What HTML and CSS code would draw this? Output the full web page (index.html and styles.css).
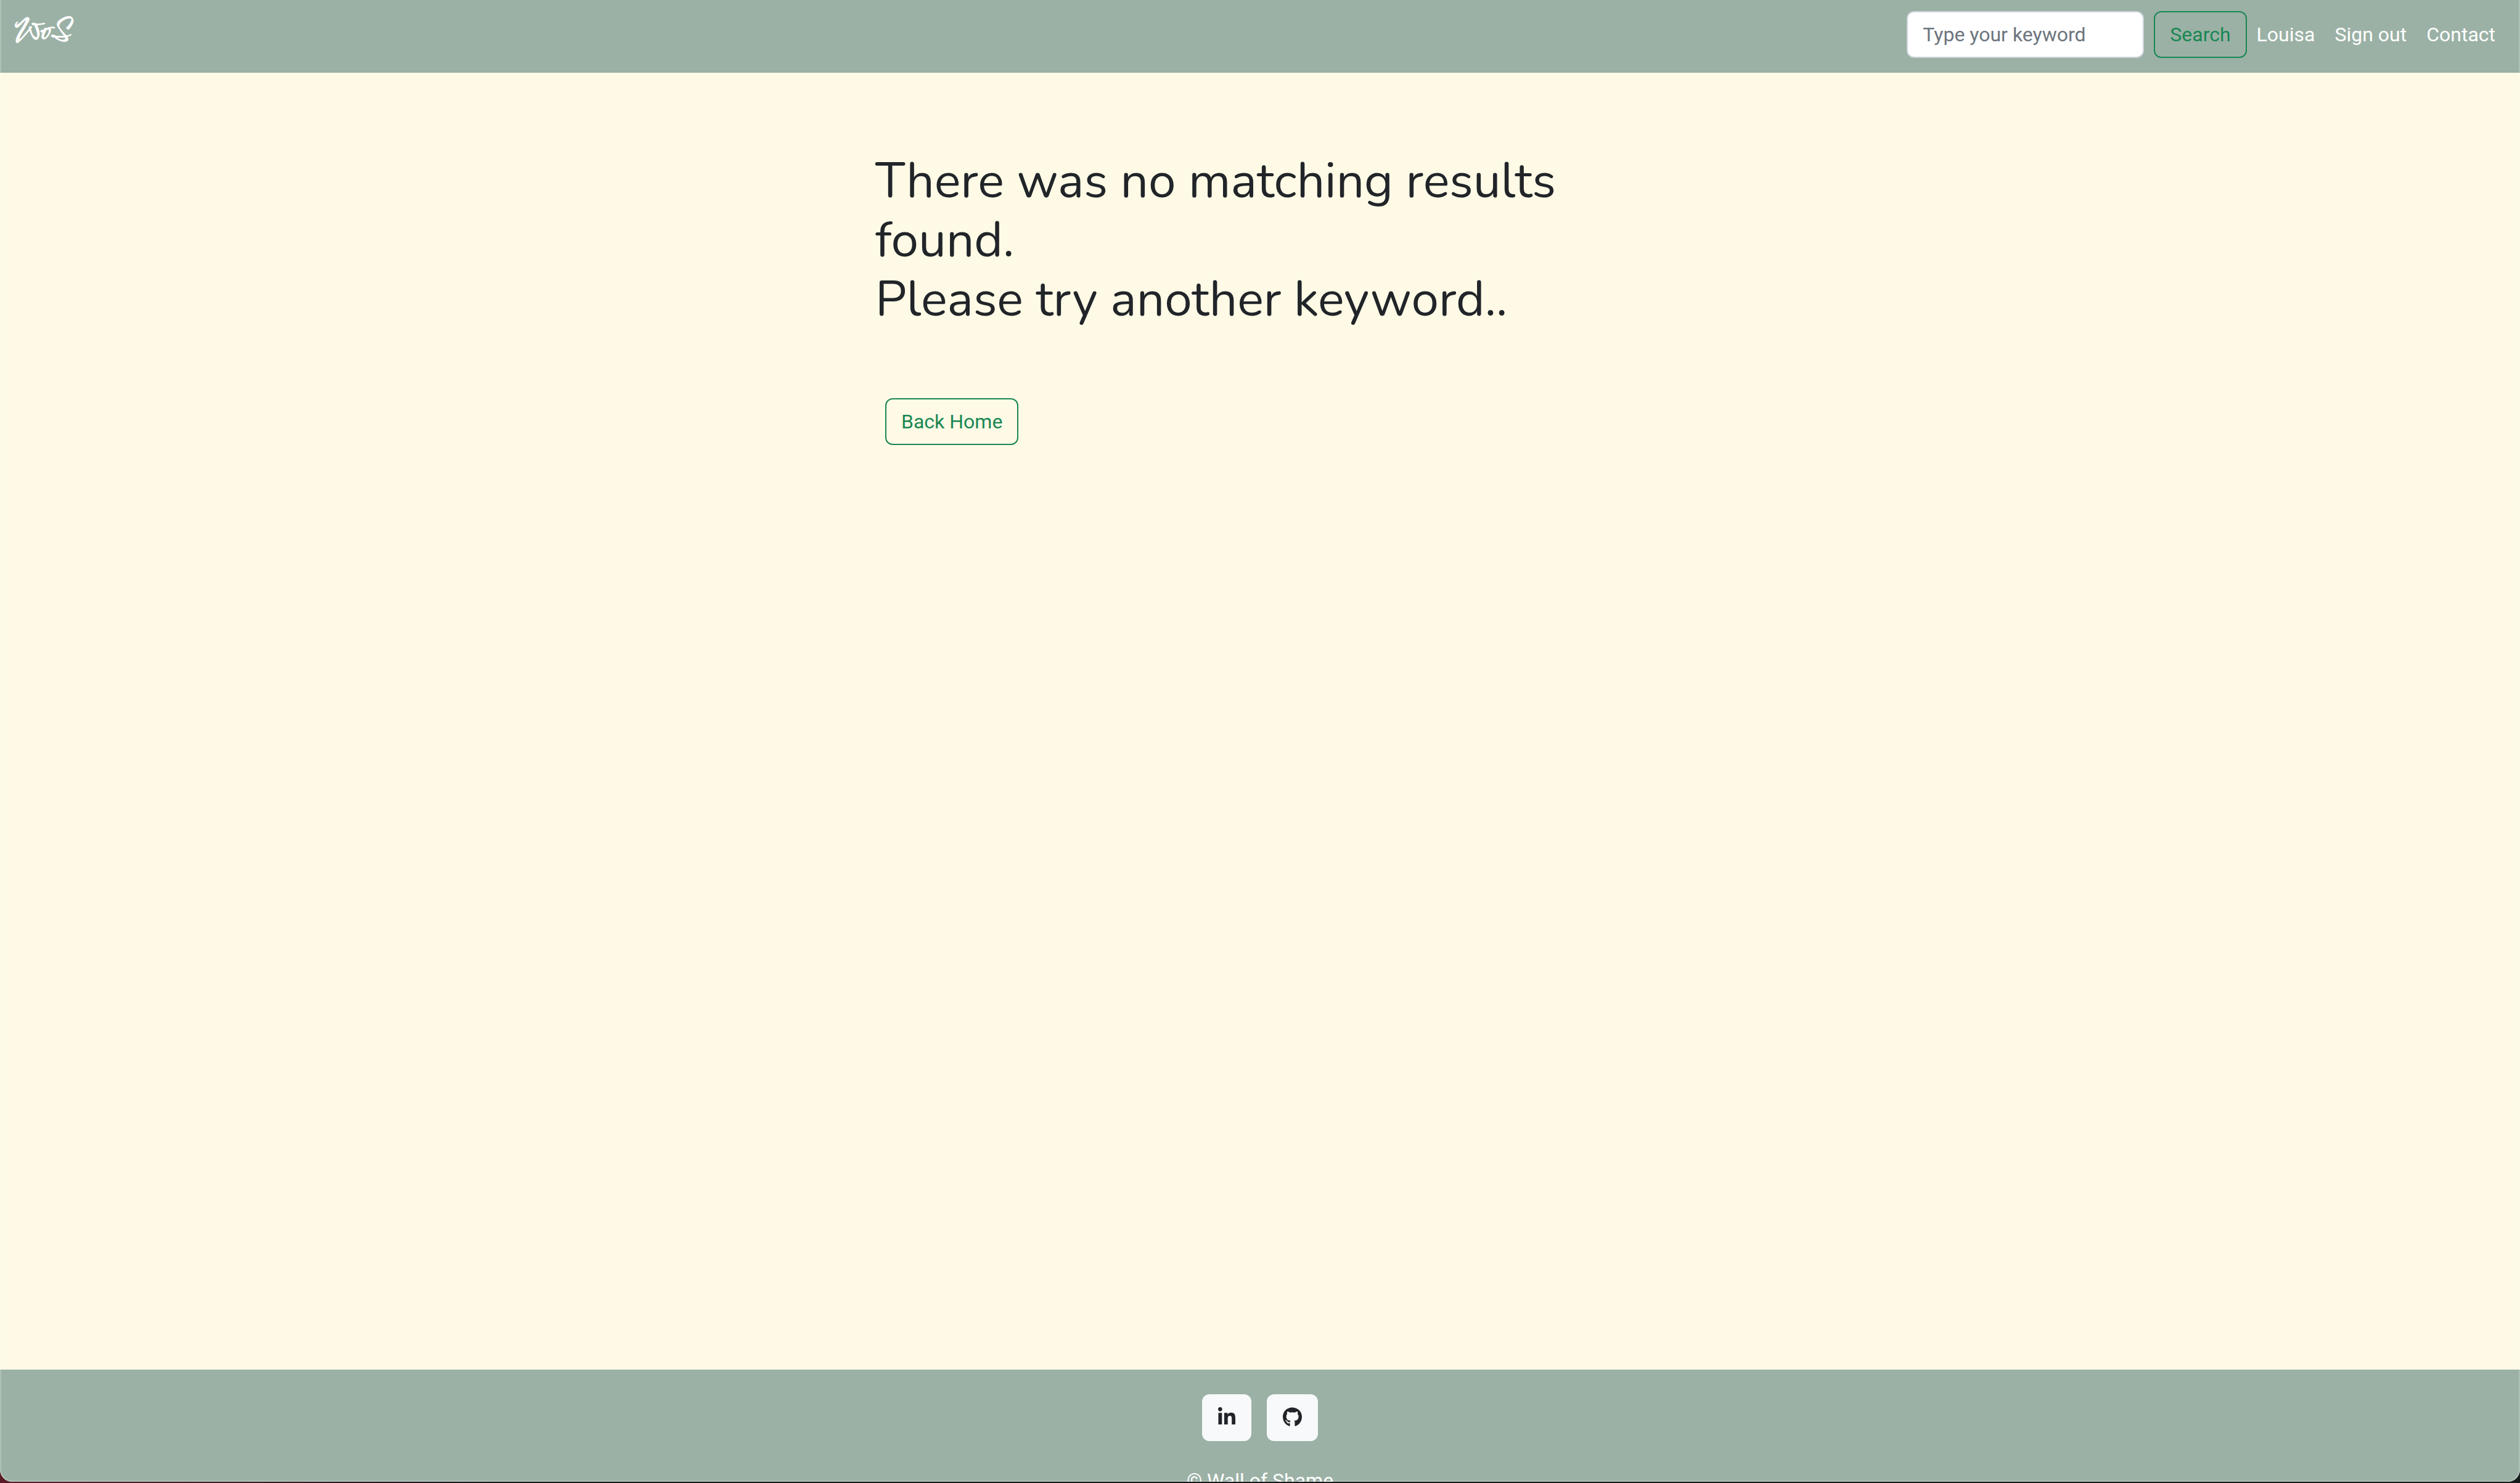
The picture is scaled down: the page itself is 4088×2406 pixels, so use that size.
FILE: index.html
```
<!DOCTYPE html>
<html lang="en">
<head>
<meta charset="utf-8">
<title>Wall of Shame</title>
<link rel="stylesheet" href="styles.css">
</head>
<body>
<div class="window">
  <header class="navbar">
    <a class="brand" href="#">WoS</a>
    <div class="nav-right">
      <form class="search">
        <input class="search-input" type="search" placeholder="Type your keyword" aria-label="Search">
        <button class="btn" type="submit">Search</button>
      </form>
      <nav class="links">
        <a href="#">Louisa</a>
        <a href="#">Sign out</a>
        <a href="#">Contact</a>
      </nav>
    </div>
  </header>
  <main class="content">
    <h1 class="title">There was no matching results found.<br>Please try another keyword..</h1>
    <a class="btn back" href="#">Back Home</a>
  </main>
  <footer class="footer">
    <div class="social">
      <a class="social-link" href="#" aria-label="LinkedIn">
        <svg width="28" height="32" viewBox="0 0 448 512" aria-hidden="true"><path d="M100.28 448H7.4V148.9h92.88zM53.79 108.1C24.09 108.1 0 83.5 0 53.8a53.79 53.79 0 0 1 107.58 0c0 29.7-24.1 54.3-53.79 54.3zM447.9 448h-92.68V302.4c0-34.7-.7-79.2-48.29-79.2-48.29 0-55.69 37.7-55.69 76.7V448h-92.78V148.9h89.08v40.8h1.3c12.4-23.5 42.69-48.3 87.88-48.3 94 0 111.28 61.9 111.28 142.3V448z"/></svg>
      </a>
      <a class="social-link" href="#" aria-label="GitHub">
        <svg width="31" height="32" viewBox="0 0 496 512" aria-hidden="true"><path d="M165.9 397.4c0 2-2.3 3.6-5.2 3.6-3.3.3-5.6-1.3-5.6-3.6 0-2 2.3-3.6 5.2-3.6 3-.3 5.6 1.3 5.6 3.6zm-31.1-4.5c-.7 2 1.3 4.3 4.3 4.9 2.6 1 5.6 0 6.2-2s-1.3-4.3-4.3-5.2c-2.6-.7-5.5.3-6.2 2.3zm44.2-1.7c-2.9.7-4.9 2.6-4.6 4.9.3 2 2.9 3.3 5.9 2.6 2.9-.7 4.9-2.6 4.6-4.6-.3-1.9-3-3.2-5.9-2.9zM244.8 8C106.1 8 0 113.3 0 252c0 110.9 69.8 205.8 169.5 239.2 12.8 2.3 17.3-5.6 17.3-12.1 0-6.2-.3-40.4-.3-61.4 0 0-70 15-84.7-29.8 0 0-11.4-29.1-27.8-36.6 0 0-22.9-15.7 1.6-15.4 0 0 24.9 2 38.6 25.8 21.9 38.6 58.6 27.5 72.9 20.9 2.3-16 8.8-27.1 16-33.7-55.9-6.2-112.3-14.3-112.3-110.5 0-27.5 7.6-41.3 23.6-58.9-2.6-6.5-11.1-33.3 2.6-67.9 20.9-6.5 69 27 69 27 20-5.6 41.5-8.5 62.8-8.5s42.8 2.9 62.8 8.5c0 0 48.1-33.6 69-27 13.7 34.7 5.2 61.4 2.6 67.9 16 17.7 25.8 31.5 25.8 58.9 0 96.5-58.9 104.2-114.8 110.5 9.2 7.9 17 22.9 17 46.4 0 33.7-.3 75.4-.3 83.6 0 6.5 4.6 14.4 17.3 12.1C428.2 457.8 496 362.9 496 252 496 113.3 383.5 8 244.8 8z"/></svg>
      </a>
    </div>
    <p class="copyright">© Wall of Shame</p>
  </footer>
</div>
</body>
</html>
```
FILE: styles.css
```
* {
  box-sizing: border-box;
}

body {
  margin: 0;
  height: 100vh;
  padding-bottom: 2px;
  overflow: hidden;
  background: linear-gradient(to right, #5a1a26, #151a1a 20%, #151a1a);
  color: #212529;
  font: 32px/48px Roboto, "Liberation Sans", sans-serif;
}

.window {
  position: relative;
  display: flex;
  flex-direction: column;
  height: 100%;
  overflow: hidden;
  border-radius: 0 0 20px 20px;
  background: #fefae6;
}

/* Light rim along the window's edge */
.window::after {
  content: "";
  position: absolute;
  inset: 0;
  border: solid rgba(255, 255, 255, 0.2);
  border-width: 0 2px 2px;
  border-radius: inherit;
  pointer-events: none;
}

.navbar {
  display: flex;
  flex: none;
  justify-content: space-between;
  align-items: flex-start;
  padding: 18px 24px 24px;
  background: #9bb1a5;
}

.brand {
  color: #fff;
  font: bold 48px/72px Comforter, cursive;
  text-decoration: none;
}

.nav-right,
.search,
.links {
  display: flex;
}

.search {
  gap: 16px;
}

.search-input {
  width: 385px;
  height: 76px;
  padding: 12px 24px;
  border: 2px solid #ced4da;
  border-radius: 12px;
  background: #fff;
  font: inherit;
  appearance: none;
}

.search-input::placeholder {
  color: #6c757d;
  opacity: 1;
}

.btn {
  display: inline-block;
  height: 76px;
  padding: 12px 24px;
  border: 2px solid #198754;
  border-radius: 12px;
  background: transparent;
  color: #198754;
  font: inherit;
  text-decoration: none;
}

.links a {
  padding: 14px 16px;
  color: #fff;
  text-decoration: none;
}

.content {
  flex: 1;
  width: 100%;
  max-width: 1248px;
  margin: 0 auto;
  padding-top: 128px;
}

.title {
  margin: 0 0 112px;
  font: 400 80px/96px Nunito, "Open Sans", sans-serif;
}

.back {
  margin-left: 16px;
}

.footer {
  flex: none;
  height: 182px;
  padding-top: 40px;
  background: #9bb1a5;
  text-align: center;
}

.social {
  display: flex;
  justify-content: center;
  gap: 25px;
}

.social-link {
  display: flex;
  align-items: center;
  height: 76px;
  padding: 0 26px 2px;
  border-radius: 12px;
  background: #f8f9fa;
  fill: #212529;
}

.copyright {
  margin: 40px 0 0;
  color: #fff;
}
```
